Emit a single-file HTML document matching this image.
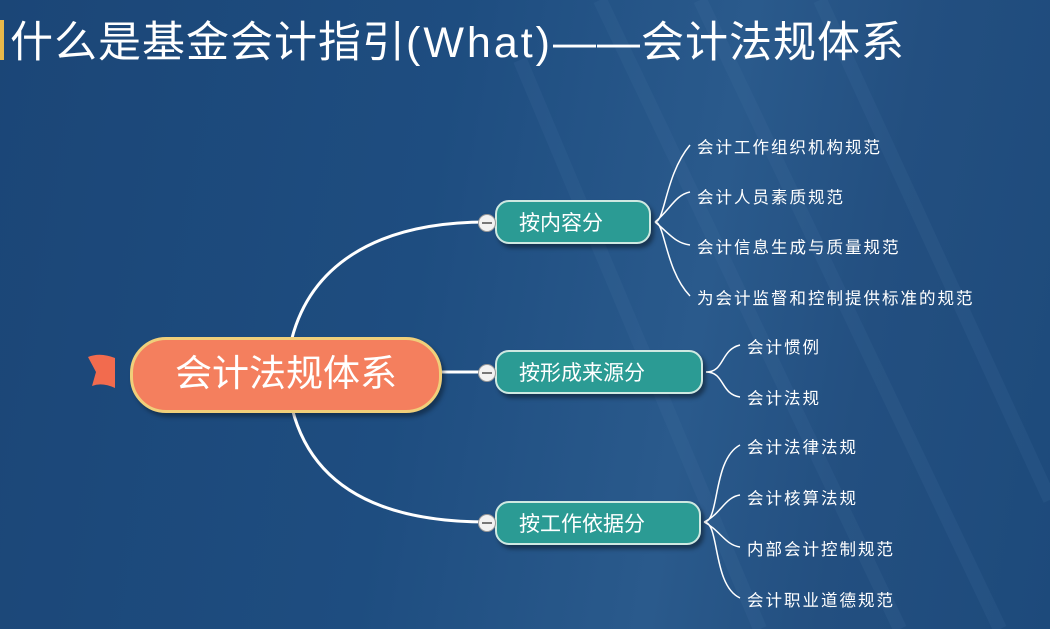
<!DOCTYPE html>
<html><head><meta charset="utf-8"><style>
body{margin:0;width:1050px;height:629px;overflow:hidden;font-family:"Liberation Sans","Noto Sans CJK SC",sans-serif;background:#1c4a7b;position:relative}
.bg{position:absolute;inset:0;background:linear-gradient(100deg,#1b4677 0%,#1e4d80 40%,#2a5a8c 65%,#234f80 80%,#1d4a7b 100%)}
.t{position:absolute;left:10px;top:8px;font-size:43px;color:#fff;white-space:nowrap;letter-spacing:1px}
.t span{letter-spacing:3px}
.bar{position:absolute;left:0;top:20px;width:4px;height:40px;background:#e8b84a}
.c{position:absolute;left:130px;top:337px;width:306px;height:70px;border-radius:36px;background:#f47f5e;border:3px solid #f0cf7a;box-shadow:3px 4px 4px rgba(0,0,0,.35);color:#fff;font-size:37px;text-align:center;line-height:68px}
.n{position:absolute;height:44px;border-radius:14px;background:#2b9b94;border:2px solid #cfe9e2;box-shadow:3px 4px 4px rgba(0,0,0,.4);color:#fff;font-size:21px;line-height:44px;padding-left:22px;box-sizing:border-box}
.d{position:absolute;width:16px;height:16px;border-radius:50%;background:#f2f2f2;border:1px solid #999}
.d:after{content:"";position:absolute;left:3px;right:3px;top:7px;height:2px;background:#777}
.l{position:absolute;color:#fff;font-size:16.5px;letter-spacing:2px;white-space:nowrap}
</style></head><body>
<div class="bg"></div>
<svg style="position:absolute;left:0;top:0" width="1050" height="629">
<g stroke="#4a77a6" stroke-width="14" opacity=".15" fill="none">
<path d="M600 0 L900 629"/><path d="M700 0 L1000 629"/><path d="M820 0 L1050 500"/><path d="M520 60 L760 629"/>
</g>
<g fill="none" stroke="#fff" stroke-width="3">
<path d="M292 338 C310 270,370 222,487 222"/>
<path d="M292 408 C310 480,370 522,487 522"/>
<path d="M440 372 L487 372"/>
</g>
<g fill="none" stroke="#fff" stroke-width="1.5">
<path d="M655 222 C665 222,665 175,690 145"/><path d="M655 222 C670 210,675 195,690 192"/>
<path d="M655 222 C670 234,675 243,690 245"/><path d="M655 222 C665 222,665 270,690 296"/>
<path d="M706 372 C725 372,720 350,740 345"/><path d="M706 372 C725 372,720 394,740 397"/>
<path d="M704 522 C720 522,712 460,740 445"/><path d="M704 522 C720 515,725 497,740 495"/>
<path d="M704 522 C720 530,725 545,740 547"/><path d="M704 522 C720 522,712 585,740 598"/>
</g>
<path d="M88 357 Q100 352,115 358 L115 388 Q102 382,92 386 L96 372 Z" fill="#f26b4e"/>
</svg>
<div class="bar"></div>
<div class="t">什么是基金会计指引<span>(What)</span>——会计法规体系</div>
<div class="c">会计法规体系</div>
<div class="n" style="left:495px;top:200px;width:156px">按内容分</div>
<div class="n" style="left:495px;top:350px;width:208px">按形成来源分</div>
<div class="n" style="left:495px;top:501px;width:206px">按工作依据分</div>
<div class="d" style="left:478px;top:214px"></div>
<div class="d" style="left:478px;top:364px"></div>
<div class="d" style="left:478px;top:514px"></div>
<div class="l" style="left:697px;top:134px">会计工作组织机构规范</div>
<div class="l" style="left:697px;top:184px">会计人员素质规范</div>
<div class="l" style="left:697px;top:234px">会计信息生成与质量规范</div>
<div class="l" style="left:697px;top:285px">为会计监督和控制提供标准的规范</div>
<div class="l" style="left:747px;top:334px">会计惯例</div>
<div class="l" style="left:747px;top:385px">会计法规</div>
<div class="l" style="left:747px;top:434px">会计法律法规</div>
<div class="l" style="left:747px;top:485px">会计核算法规</div>
<div class="l" style="left:747px;top:536px">内部会计控制规范</div>
<div class="l" style="left:747px;top:587px">会计职业道德规范</div>
</body></html>
